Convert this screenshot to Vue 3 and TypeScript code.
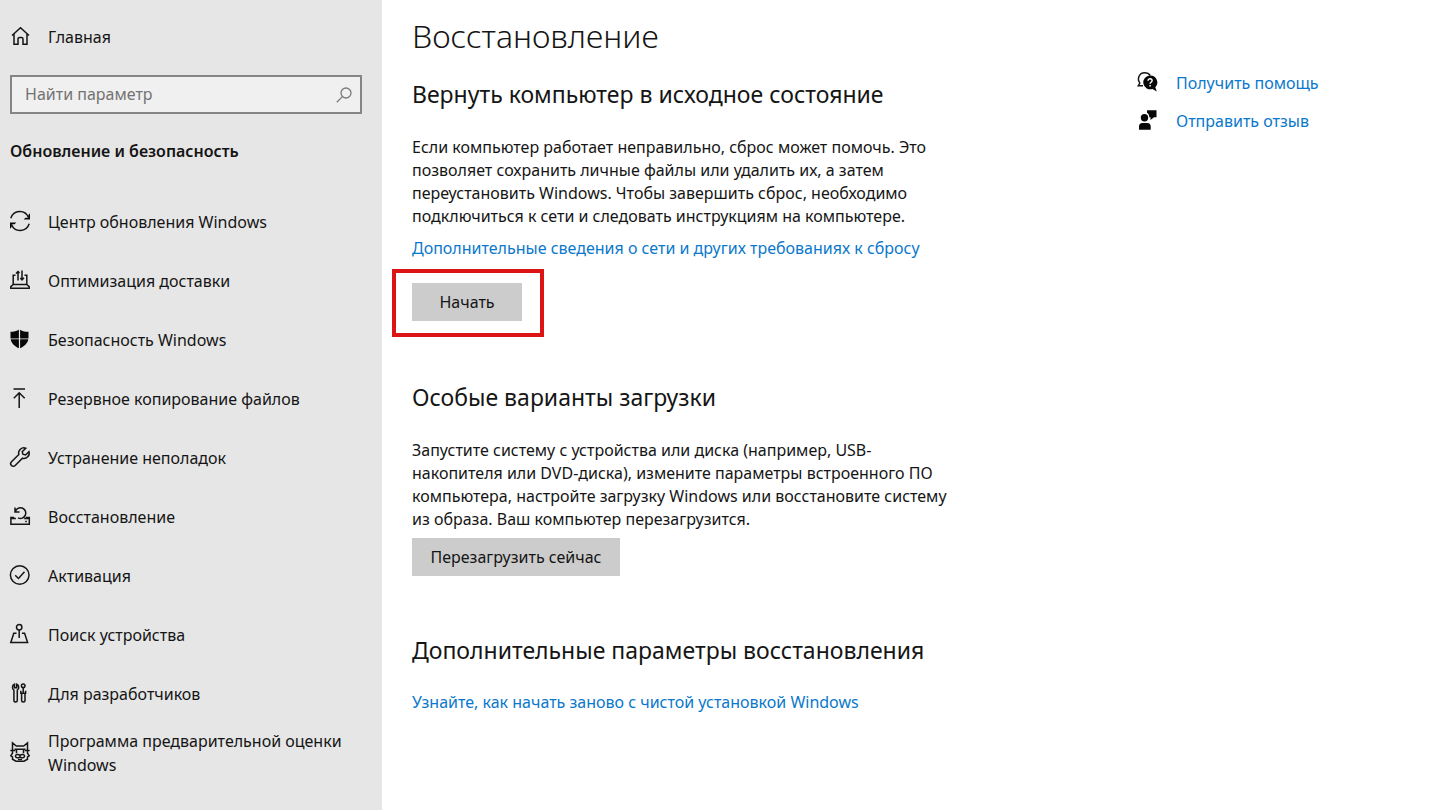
<script setup lang="ts">
import { ref } from 'vue'

interface NavItem {
  icon: string
  label: string
}

const query = ref('')

const navItems: NavItem[] = [
  { icon: 'update', label: 'Центр обновления Windows' },
  { icon: 'delivery', label: 'Оптимизация доставки' },
  { icon: 'shield', label: 'Безопасность Windows' },
  { icon: 'backup', label: 'Резервное копирование файлов' },
  { icon: 'wrench', label: 'Устранение неполадок' },
  { icon: 'recovery', label: 'Восстановление' },
  { icon: 'activation', label: 'Активация' },
  { icon: 'find', label: 'Поиск устройства' },
  { icon: 'dev', label: 'Для разработчиков' },
  { icon: 'insider', label: 'Программа предварительной оценки Windows' },
]

const resetText = [
  'Если компьютер работает неправильно, сброс может помочь. Это',
  'позволяет сохранить личные файлы или удалить их, а затем',
  'переустановить Windows. Чтобы завершить сброс, необходимо',
  'подключиться к сети и следовать инструкциям на компьютере.',
].join('\n')

const startupText = [
  'Запустите систему с устройства или диска (например, USB-',
  'накопителя или DVD-диска), измените параметры встроенного ПО',
  'компьютера, настройте загрузку Windows или восстановите систему',
  'из образа. Ваш компьютер перезагрузится.',
].join('\n')
</script>

<template>
  <div class="settings">
    <aside class="sidebar">
      <a class="home" href="#home">
        <svg class="icon" viewBox="0 0 20 20" aria-hidden="true">
          <path d="M2 9.500 10.500 1.800 19 9.500M4 8v10.200h4v-5.200q0-1.500 1.500-1.500h2q1.500 0 1.500 1.500v5.200h4V8" />
        </svg>
        <span>Главная</span>
      </a>

      <form class="search" role="search" @submit.prevent>
        <input v-model="query" type="text" placeholder="Найти параметр" aria-label="Найти параметр" />
        <svg class="search-icon" viewBox="0 0 16 16" aria-hidden="true">
          <circle cx="10" cy="6" r="5" />
          <path d="M6.400 9.600.8 15.200" />
        </svg>
      </form>

      <h2 class="group">Обновление и безопасность</h2>

      <nav class="nav">
        <a v-for="item in navItems" :key="item.icon" class="nav-item" :href="'#' + item.icon">
          <svg class="icon" viewBox="0 0 20 20" aria-hidden="true">
            <g v-if="item.icon === 'update'">
              <path d="M.8 7.200C3.500-1.200 15-2 18.500 6.500M19.200 12.800C16.500 21.200 5 22 1.500 13.500" />
              <path class="solid" d="M20 2.200v6.300h-6.300l1.700-1.700h2.900V3.900zM0 17.800v-6.300h6.300l-1.700 1.700H1.700v2.900z" />
            </g>
            <g v-else-if="item.icon === 'delivery'">
              <path d="M5.500 5.200H3.200v9.300h13.600V5.200h-2.300M3.200 14.500.8 16.700v1.500h18.400v-1.500l-2.400-2.200" />
              <path d="M8 10.500V1.500M6 3.500l2-2 1.500 1.500M12 .5v9M10.300 8l1.700 1.800 2-2" />
            </g>
            <g v-else-if="item.icon === 'shield'">
              <path class="solid" d="M9.500.3C7 2.200 3.500 2.800.5 2.800v6.700h8.400V.8zM10.100.8v8.700h8.400V2.800c-3 0-6-.3-8.400-2zM.7 10.300h8.200v8.900C4.500 17.300 1.300 14.200.7 10.300zM10.100 10.300h8.200c-.6 3.900-3.800 7-8.200 8.900z" />
            </g>
            <g v-else-if="item.icon === 'backup'">
              <path d="M3.500 1h11.500M9.200 20V5M3.800 10.200l5.400-5.400 5.500 5.400" />
            </g>
            <g v-else-if="item.icon === 'wrench'">
              <path d="M15.700 1.200a5.300 5.300 0 0 0-6.900 6.300L1.500 14.700a2.600 2.600 0 0 0 3.700 3.800l7.300-7.300a5.300 5.300 0 0 0 6.500-6.600L15.500 8l-2.600-.8-.7-2.500z" />
            </g>
            <g v-else-if="item.icon === 'recovery'">
              <path d="M4.200 11.500H.9v6.700h18.400v-6.700h-3.600M.9 12.500h5M14.200 12.500h5M15.200 15.500h1.600" />
              <path d="M5.300 5.800A5.300 5.300 0 1 1 8 11.800M5 1.500v4.500h4.500" />
            </g>
            <g v-else-if="item.icon === 'activation'">
              <circle cx="9.700" cy="10" r="9.300" />
              <path d="m5.200 10.200 3.300 3.300 6-6.700" />
            </g>
            <g v-else-if="item.icon === 'find'">
              <circle cx="9.200" cy="3.300" r="2.700" />
              <path d="M9.200 6V14M6.500 9.300H3.800L.8 18.500h16.800l-3-9.200h-2.700" />
            </g>
            <g v-else-if="item.icon === 'dev'">
              <path d="M4.500 1.200v3.500h2.200V1.200c2.600 1 2.600 4.700.6 6v10.300c0 2-3.400 2-3.400 0V7.200c-2-1.300-2-5 .6-6z" />
              <circle cx="13.200" cy="2.800" r="1.800" />
              <path d="M13.200 4.600V10M10.800 7.800v2.500h4.800V7.800M11.600 10.500v7c0 2 3.400 2 3.400 0v-7" />
            </g>
            <g v-else>
              <path d="M2.500 8.500V.9L6.300 4h7.400L17.500.9v7.600M.3 8.500h5M14.700 8.500h5M4.500 7.200h11M2.500 8.500v2.700L.8 13.700l1.700 1.100v2.400l3.500 2h8l3.500-2v-2.400l1.700-1.100-1.700-2.500V8.500" />
              <path d="M6.500 8v3.200M13.500 8v3.200M10 13.300c-2.500-2-5.300-.2-4.300 1.500s3.500 1.200 4.300-.3c.8 1.500 3.300 2 4.300.3s-1.800-3.500-4.300-1.500zM8 17.500h4" />
            </g>
          </svg>
          <span>{{ item.label }}</span>
        </a>
      </nav>
    </aside>

    <main class="content">
      <h1>Восстановление</h1>
      <div class="columns">
        <div class="sections">
          <section>
            <h2>Вернуть компьютер в исходное состояние</h2>
            <p>{{ resetText }}</p>
            <a class="link" href="#requirements">Дополнительные сведения о сети и других требованиях к сбросу</a>
            <div class="highlight">
              <button class="btn start" type="button">Начать</button>
            </div>
          </section>

          <section>
            <h2>Особые варианты загрузки</h2>
            <p>{{ startupText }}</p>
            <button class="btn restart" type="button">Перезагрузить сейчас</button>
          </section>

          <section>
            <h2>Дополнительные параметры восстановления</h2>
            <a class="link" href="#fresh-start">Узнайте, как начать заново с чистой установкой Windows</a>
          </section>
        </div>

        <aside class="help">
          <a class="help-link" href="#help">
            <svg class="icon" viewBox="0 0 20 20" aria-hidden="true">
              <path d="M3 11C-.3 7.500 2 .8 7.500.8c2.600 0 4.600 1 5.700 2.700M3 10.800 1.300 13.700H6" />
              <path class="solid" d="M13 3.500a6.900 6.900 0 1 0 2.500 13.400l4.300 2.600-1.500-4.300A6.900 6.900 0 0 0 13 3.500z" />
              <path class="cutout" d="M11 8.800c0-2.800 4.300-2.500 4.100 0-.1 1.400-2 1.500-2 3M13.100 13v1.500" />
            </svg>
            <span>Получить помощь</span>
          </a>
          <a class="help-link" href="#feedback">
            <svg class="icon" viewBox="0 0 20 20" aria-hidden="true">
              <circle class="solid" cx="7.500" cy="7.800" r="3.700" />
              <path class="solid" d="M2 19.800v-3.300c0-2 1.300-3.500 3.300-3.500h5.100c2 0 3.300 1.500 3.300 3.500v3.300zM10 .3h9.500v6.900H17L13.500 10V7.200h-1.200C12.200 5 11.500 3.800 10 2.800z" />
            </svg>
            <span>Отправить отзыв</span>
          </a>
        </aside>
      </div>
    </main>
  </div>
</template>

<style>
body {
  margin: 0;
  background: #fff;
}
</style>

<style scoped>
.settings {
  display: flex;
  min-height: 100vh;
  font-family: "Noto Sans", "Open Sans", sans-serif;
  font-size: 16px;
  line-height: 24px;
  color: #151515;
}

.sidebar {
  box-sizing: border-box;
  flex: 0 0 382px;
  padding: 25px 20px 0 10px;
  background: #e6e6e6;
}

.icon {
  flex: none;
  width: 20px;
  height: 20px;
  margin-bottom: 2px;
  overflow: visible;
  fill: none;
  stroke: #151515;
  stroke-width: 1.5;
}

.icon .solid {
  fill: #080808;
  stroke: none;
}

.icon .cutout {
  stroke: #fff;
}

.home,
.nav-item {
  display: flex;
  align-items: center;
  gap: 18px;
  color: inherit;
  text-decoration: none;
}

.search {
  display: flex;
  align-items: center;
  box-sizing: border-box;
  height: 39px;
  margin-top: 26px;
  padding: 0 8px 0 13px;
  border: 2px solid #858585;
  background: #f0f0f0;
}

.search input {
  flex: 1;
  min-width: 0;
  padding: 0 0 2px;
  border: 0;
  outline: 0;
  background: transparent;
  font: inherit;
  color: inherit;
}

.search input::placeholder {
  color: #737373;
  opacity: 1;
}

.search-icon {
  width: 16px;
  height: 16px;
  fill: none;
  stroke: #7a7a7a;
  stroke-width: 1.3;
}

.group {
  margin: 25px 0 0;
  font-size: 16px;
  font-weight: 600;
  line-height: 24px;
}

.nav {
  margin-top: 29px;
}

.nav-item {
  min-height: 59px;
}

.content {
  flex: 1;
  min-width: 0;
  padding: 16px 20px 20px 30px;
}

h1,
.content h2,
p {
  margin: 0;
}

h1 {
  font-size: 32px;
  font-weight: 300;
  line-height: 40px;
}

.columns {
  display: grid;
  grid-template-columns: minmax(0, 725px) auto;
  justify-content: start;
}

.sections {
  padding-top: 22px;
}

section + section {
  margin-top: 58px;
}

.content h2 {
  font-size: 23px;
  font-weight: 400;
  line-height: 32px;
}

p {
  margin-top: 26px;
  line-height: 23px;
  white-space: pre-line;
}

.link,
.help-link {
  color: #0a78cc;
  text-decoration: none;
}

.link {
  display: block;
  margin-top: 8px;
}

h2 + .link {
  margin-top: 24px;
}

.btn {
  display: block;
  height: 38px;
  padding: 0;
  border: 0;
  background: #ccc;
  font: inherit;
  color: inherit;
}

.start {
  width: 110px;
}

.restart {
  width: 208px;
  margin-top: 7px;
}

.highlight {
  width: max-content;
  margin: 9px 0 -14px -20px;
  padding: 10px 18px 12px 16px;
  border: 4px solid #dc1414;
}

.help {
  display: flex;
  flex-direction: column;
  align-items: flex-start;
  gap: 14px;
  padding-top: 15px;
}

.help-link {
  display: flex;
  align-items: center;
  gap: 19px;
}
</style>
